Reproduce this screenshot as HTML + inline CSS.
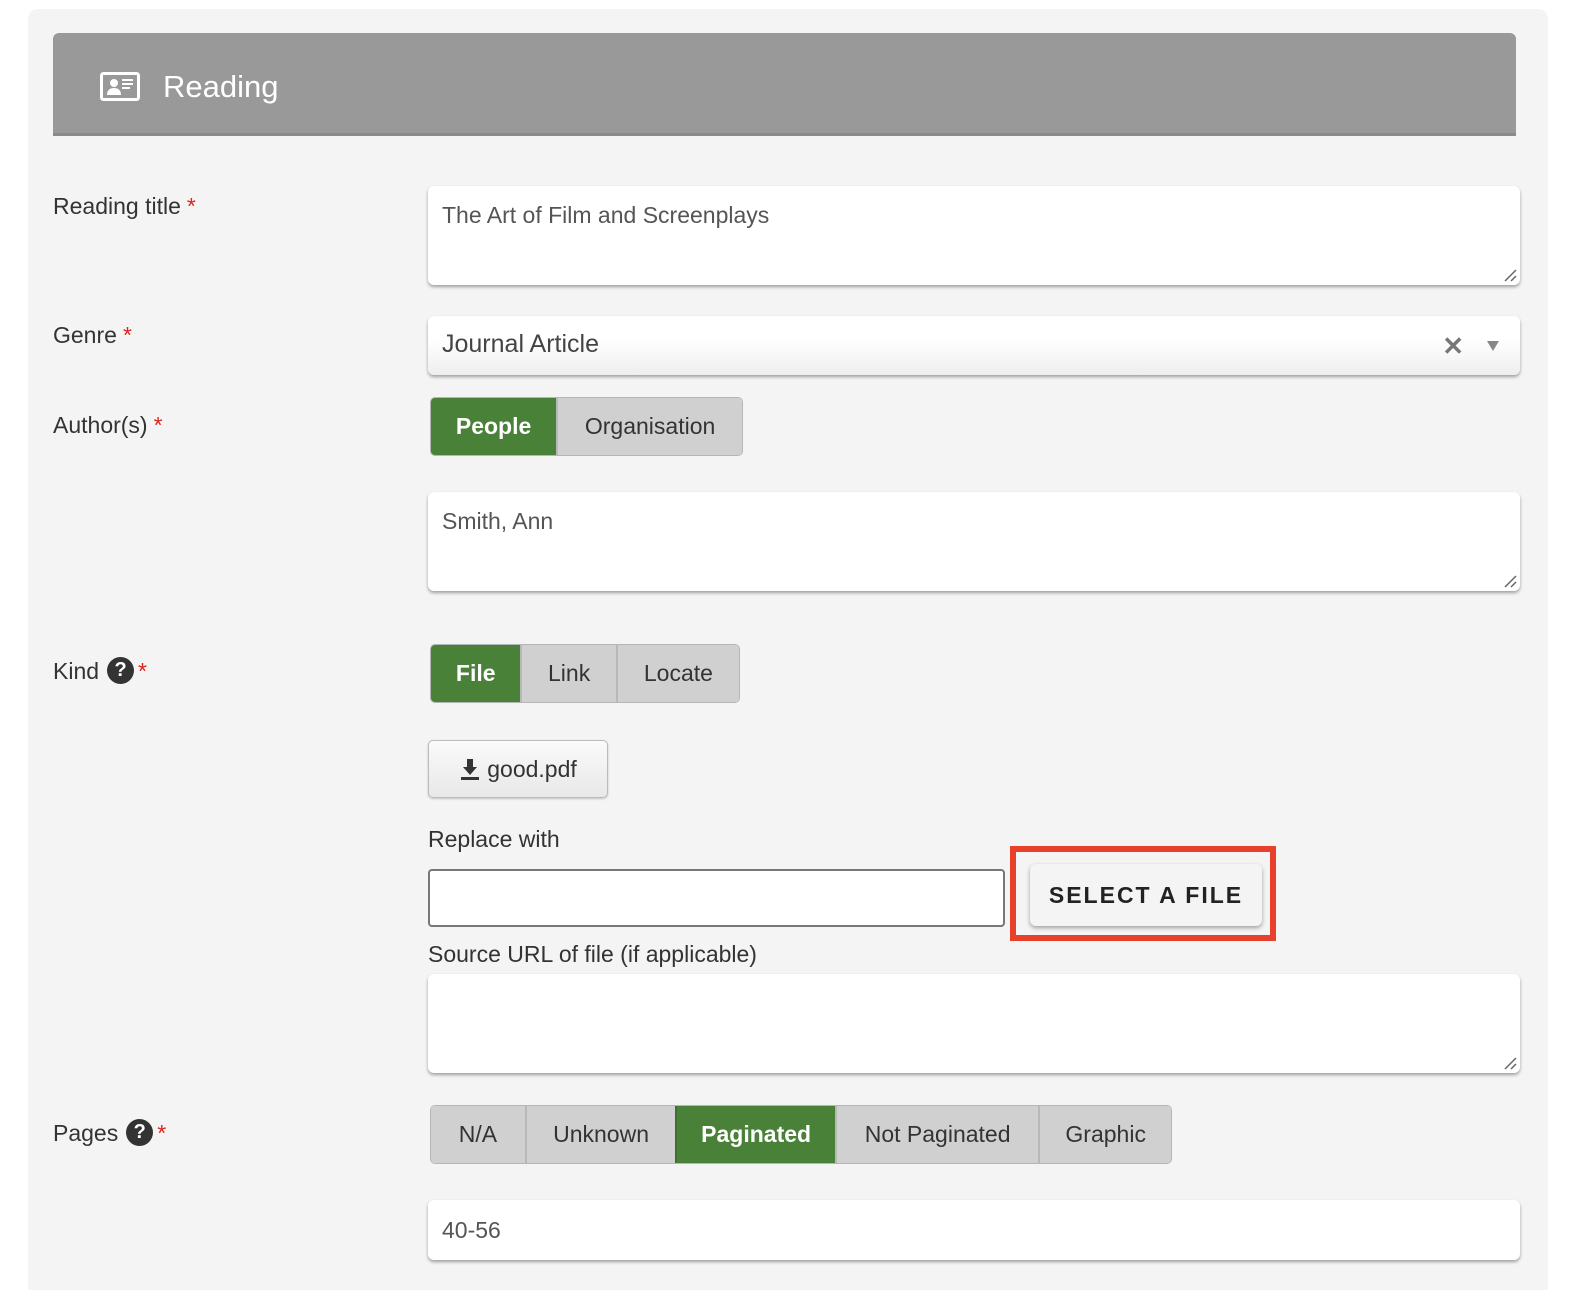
<!DOCTYPE html>
<html><head><meta charset="utf-8"><style>
*{box-sizing:border-box;margin:0;padding:0}
html,body{width:1576px;height:1290px;overflow:hidden}
body{background:#fff;font-family:"Liberation Sans",Arial,sans-serif;position:relative;color:#333}
.panel{position:absolute;left:28px;top:9px;width:1520px;height:1281px;background:#f4f4f4;border-radius:10px 10px 0 0}
.hdr{position:absolute;left:53px;top:33px;width:1463px;height:103px;background:#999;border-radius:6px 6px 0 0;border-bottom:3px solid #8a8a8a}
.hdr span{position:absolute;left:110px;top:36px;color:#fff;font-size:31px}
.lbl{position:absolute;left:53px;font-size:23px;color:#333}
.req{color:#e0231b;margin-left:6px}
.ta{position:absolute;left:428px;width:1092px;background:#fff;border-radius:6px;box-shadow:0 2px 3px rgba(0,0,0,.35);font-size:23px;color:#555;padding:16px 14px}
.grip{position:absolute;right:3px;bottom:3px;width:14px;height:14px}
.bg{position:absolute;display:flex;height:59px;border:1px solid #b5b5b5;border-radius:5px;overflow:hidden}
.bg div{background:#d0d0d0;font-size:23px;color:#333;display:flex;align-items:center;justify-content:center;border-left:2px solid #b8b8b8}
.bg div:first-child{border-left:none}
.bg .on{background:#4a8138;color:#fff;font-weight:bold;border-color:#3f7030}
.help{display:inline-block;width:27px;height:27px;border-radius:50%;background:#333;color:#fff;font-size:20px;font-weight:bold;text-align:center;line-height:27px;position:relative;top:-2px;vertical-align:middle;margin-left:8px}
</style></head><body>
<div class="panel"></div>
<div class="hdr">
<svg style="position:absolute;left:47px;top:39px" width="40" height="29" viewBox="0 0 40 29"><rect x="1.5" y="1.5" width="37" height="26" rx="2" fill="none" stroke="#fff" stroke-width="3"/><circle cx="14" cy="11" r="4" fill="#fff"/><path d="M7 23c0-5 3-7 7-7s7 2 7 7z" fill="#fff"/><rect x="22" y="7" width="11" height="2" fill="#fff"/><rect x="22" y="11" width="11" height="2" fill="#fff"/><rect x="22" y="15" width="8" height="2" fill="#fff"/></svg>
<span>Reading</span></div>

<div class="lbl" style="top:193px">Reading title<span class="req">*</span></div>
<div class="ta" style="top:186px;height:99px">The Art of Film and Screenplays<svg class="grip" viewBox="0 0 14 14"><path d="M2 13L13 2M8 13L13 8" stroke="#666" stroke-width="1.5"/></svg></div>

<div class="lbl" style="top:322px">Genre<span class="req">*</span></div>
<div class="ta" style="top:316px;height:59px;background:linear-gradient(#fff 40%,#eee);padding:14px 14px;font-size:25px;color:#444">Journal Article
<span style="position:absolute;right:56px;top:15px;color:#777;font-weight:bold;font-size:26px">✕</span>
<span style="position:absolute;right:21px;top:25px;width:0;height:0;border-left:6px solid transparent;border-right:6px solid transparent;border-top:10px solid #888"></span></div>

<div class="lbl" style="top:412px">Author(s)<span class="req">*</span></div>
<div class="bg" style="left:430px;top:397px;width:313px"><div class="on" style="width:126px">People</div><div style="width:187px">Organisation</div></div>
<div class="ta" style="top:492px;height:99px">Smith, Ann<svg class="grip" viewBox="0 0 14 14"><path d="M2 13L13 2M8 13L13 8" stroke="#666" stroke-width="1.5"/></svg></div>

<div class="lbl" style="top:658px">Kind<span class="help">?</span><span class="req" style="margin-left:4px">*</span></div>
<div class="bg" style="left:430px;top:644px;width:310px"><div class="on" style="width:90px">File</div><div style="width:96px">Link</div><div style="width:124px">Locate</div></div>

<div style="position:absolute;left:428px;top:740px;width:180px;height:58px;border:1px solid #bbb;border-radius:5px;background:linear-gradient(#fafafa,#e8e8e8);font-size:23px;color:#333;display:flex;align-items:center;justify-content:center;box-shadow:0 1px 2px rgba(0,0,0,.2)">
<svg width="22" height="24" viewBox="0 0 22 24" style="margin-right:6px"><path d="M8 2h6v8h4l-7 8-7-8h4z" fill="#333"/><rect x="2" y="20" width="18" height="3" fill="#333"/></svg>good.pdf</div>

<div class="lbl" style="left:428px;top:826px">Replace with</div>
<div style="position:absolute;left:428px;top:869px;width:577px;height:58px;background:#fff;border:2px solid #777;border-radius:4px"></div>
<div style="position:absolute;left:1010px;top:846px;width:266px;height:95px;border:6px solid #e8402a"></div>
<div style="position:absolute;left:1030px;top:864px;width:232px;height:62px;background:#f4f4f4;border-radius:6px;box-shadow:0 2px 4px rgba(0,0,0,.35);font-size:23px;font-weight:bold;letter-spacing:2px;color:#222;display:flex;align-items:center;justify-content:center">SELECT A FILE</div>

<div class="lbl" style="left:428px;top:941px">Source URL of file (if applicable)</div>
<div class="ta" style="top:974px;height:99px"><svg class="grip" viewBox="0 0 14 14"><path d="M2 13L13 2M8 13L13 8" stroke="#666" stroke-width="1.5"/></svg></div>

<div class="lbl" style="top:1120px">Pages<span class="help">?</span><span class="req" style="margin-left:4px">*</span></div>
<div class="bg" style="left:430px;top:1105px;width:742px"><div style="width:94px">N/A</div><div style="width:151px">Unknown</div><div class="on" style="width:160px">Paginated</div><div style="width:204px">Not Paginated</div><div style="width:133px">Graphic</div></div>
<div class="ta" style="top:1200px;height:60px;padding-top:17px">40-56</div>
</body></html>
